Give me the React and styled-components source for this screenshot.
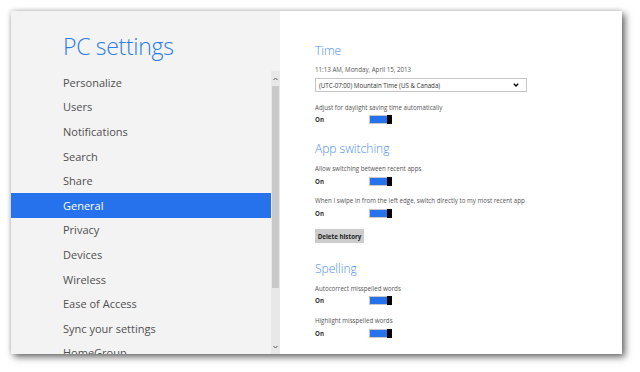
import React from "react";
import styled, { createGlobalStyle } from "styled-components";

const Global = createGlobalStyle`
  html, body { margin: 0; padding: 0; background: #ffffff; }
  body { font-family: "Open Sans", "Noto Sans", sans-serif; }
  * { box-sizing: border-box; }
`;

const Page = styled.div`
  padding: 11px;
  width: 640px;
  height: 372px;
  overflow: hidden;
`;

const Window = styled.div`
  width: 611px;
  height: 343px;
  display: flex;
  overflow: hidden;
  background: #ffffff;
  box-shadow: 3px 3px 7px rgba(0, 0, 0, 0.6), -1px -1px 4px rgba(0, 0, 0, 0.12);
`;

const Sidebar = styled.div`
  width: 269px;
  flex: none;
  display: flex;
  flex-direction: column;
  background: #f3f3f3;
  overflow: hidden;
`;

const Header = styled.div`
  height: 59px;
  flex: none;
  padding: 21px 0 0 52px;
`;

const Title = styled.h1`
  margin: 0;
  font-family: "Open Sans", sans-serif;
  font-weight: 300;
  font-size: 23px;
  line-height: 28px;
  color: #2d7be6;
  letter-spacing: -0.3px;
`;

const ListArea = styled.div`
  flex: 1;
  display: flex;
  min-height: 0;
`;

const NavList = styled.ul`
  flex: 1;
  margin: 0;
  padding: 0;
  list-style: none;
`;

const NavItem = styled.li`
  height: 24.6px;
  display: flex;
  align-items: center;
  padding-left: 52px;
  font-size: 11px;
  color: ${(p) => (p.$active ? "#ffffff" : "#505050")};
  background: ${(p) => (p.$active ? "#2672ec" : "transparent")};
  white-space: nowrap;
`;

const Scrollbar = styled.div`
  width: 9px;
  flex: none;
  margin-top: 1px;
  background: #e8e8e8;
  display: flex;
  flex-direction: column;
  align-items: center;
`;

const ScrollArrow = styled.div`
  height: 15px;
  flex: none;
  display: flex;
  align-items: center;
  justify-content: center;
`;

const ScrollThumb = styled.div`
  width: 7px;
  height: 202px;
  flex: none;
  background: #c9c9c9;
`;

const ScrollSpacer = styled.div`
  flex: 1;
`;

const Content = styled.div`
  flex: 1;
  padding: 31px 0 0 35px;
  display: flex;
  flex-direction: column;
  align-items: flex-start;
`;

const SectionTitle = styled.h2`
  margin: ${(p) => p.$mt || 0}px 0 0 0;
  font-family: "Open Sans", sans-serif;
  font-weight: 300;
  font-size: 12px;
  line-height: 18px;
  color: #4a8ef0;
`;

const SmallText = styled.div`
  margin-top: ${(p) => p.$mt || 0}px;
  font-size: 6.2px;
  line-height: 10px;
  color: #555555;
  white-space: nowrap;
`;

const Select = styled.div`
  margin-top: 3px;
  width: 212px;
  height: 14px;
  border: 1px solid #c6c6c6;
  display: flex;
  align-items: center;
  justify-content: space-between;
  padding: 0 7px 0 3px;
  font-size: 6.2px;
  color: #333;
  background: #fff;
`;

const ToggleRow = styled.div`
  margin-top: ${(p) => p.$mt || 0}px;
  height: 10px;
  display: flex;
  align-items: center;
`;

const ToggleLabel = styled.span`
  width: 54px;
  font-size: 6.2px;
  font-weight: 700;
  color: #333;
`;

const Toggle = styled.div`
  width: 23px;
  height: 9px;
  display: flex;
  padding: 1px 0 1px 1px;
  background: #c8c8c8;
`;

const ToggleFill = styled.div`
  flex: 1;
  background: #2672ec;
`;

const ToggleThumb = styled.div`
  width: 5px;
  margin-top: -1px;
  margin-bottom: -1px;
  background: #000;
`;

const Button = styled.button`
  margin-top: 11px;
  width: 49px;
  height: 14px;
  border: none;
  padding: 0;
  background: #cccccc;
  font-family: "Open Sans", sans-serif;
  font-size: 6.2px;
  font-weight: 700;
  color: #222;
`;

const Chevron = ({ up, color = "#555" }) => (
  <svg width="5" height="4" viewBox="0 0 5 4">
    <polyline
      points={up ? "0.5,3 2.5,1 4.5,3" : "0.5,1 2.5,3 4.5,1"}
      fill="none"
      stroke={color}
      strokeWidth="1"
    />
  </svg>
);

const SwitchSetting = ({ mt }) => (
  <ToggleRow $mt={mt}>
    <ToggleLabel>On</ToggleLabel>
    <Toggle>
      <ToggleFill />
      <ToggleThumb />
    </Toggle>
  </ToggleRow>
);

const navItems = [
  "Personalize",
  "Users",
  "Notifications",
  "Search",
  "Share",
  "General",
  "Privacy",
  "Devices",
  "Wireless",
  "Ease of Access",
  "Sync your settings",
  "HomeGroup",
];

export default function App() {
  return (
    <>
      <Global />
      <Page>
        <Window>
          <Sidebar>
            <Header>
              <Title>PC settings</Title>
            </Header>
            <ListArea>
              <NavList>
                {navItems.map((n) => (
                  <NavItem key={n} $active={n === "General"}>
                    {n}
                  </NavItem>
                ))}
              </NavList>
              <Scrollbar>
                <ScrollArrow>
                  <Chevron up />
                </ScrollArrow>
                <ScrollThumb />
                <ScrollSpacer />
                <ScrollArrow>
                  <Chevron />
                </ScrollArrow>
              </Scrollbar>
            </ListArea>
          </Sidebar>
          <Content>
            <SectionTitle>Time</SectionTitle>
            <SmallText $mt={5}>11:13 AM, Monday, April 15, 2013</SmallText>
            <Select>
              <span>(UTC-07:00) Mountain Time (US &amp; Canada)</span>
              <svg width="6" height="4" viewBox="0 0 6 4">
                <polyline points="0.8,0.8 3,3 5.2,0.8" fill="none" stroke="#000" strokeWidth="1.4" />
              </svg>
            </Select>
            <SmallText $mt={11}>Adjust for daylight saving time automatically</SmallText>
            <SwitchSetting mt={1} />

            <SectionTitle $mt={16}>App switching</SectionTitle>
            <SmallText $mt={6}>Allow switching between recent apps</SmallText>
            <SwitchSetting mt={2} />
            <SmallText $mt={10}>When I swipe in from the left edge, switch directly to my most recent app</SmallText>
            <SwitchSetting mt={2} />
            <Button>Delete history</Button>

            <SectionTitle $mt={17}>Spelling</SectionTitle>
            <SmallText $mt={6}>Autocorrect misspelled words</SmallText>
            <SwitchSetting mt={1} />
            <SmallText $mt={11}>Highlight misspelled words</SmallText>
            <SwitchSetting mt={2} />
          </Content>
        </Window>
      </Page>
    </>
  );
}
